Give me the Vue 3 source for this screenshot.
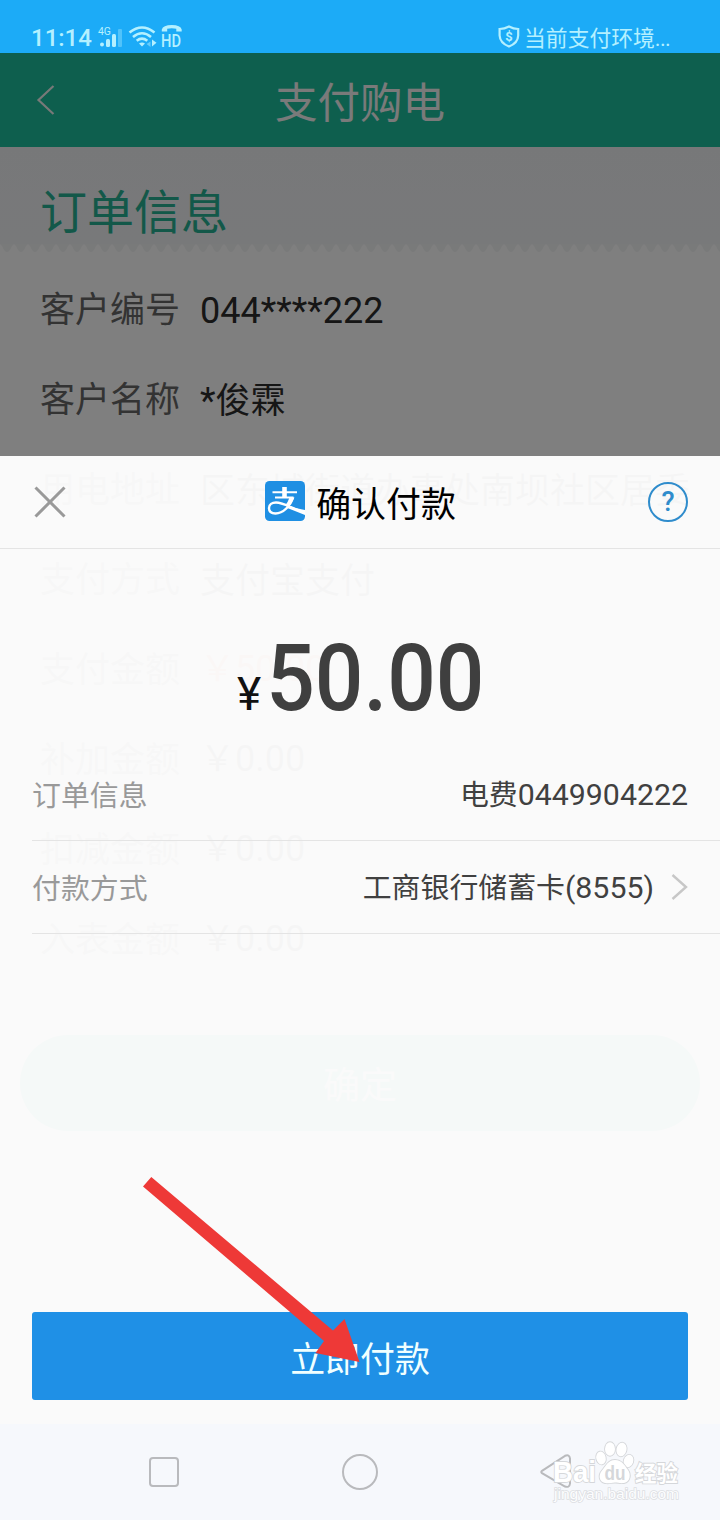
<script setup>
import { reactive } from "vue";

const local_data = reactive({
    order: [
        { label: "客户编号", number: "044****222" },
        { label: "客户名称", number: "*", value: "俊霖" },
        { label: "用电地址", value: "区东城街道办事处南坝社区居委" },
        { label: "支付方式", value: "支付宝支付" },
        { label: "支付金额", number: "50.00", money: true, red: true },
        { label: "补加金额", number: "0.00", money: true },
        { label: "扣减金额", number: "0.00", money: true },
        { label: "入表金额", number: "0.00", money: true },
    ],
    amount: "50.00",
    card: "(8555)",
});
</script>
<template>
    <div class="screen">
        <div class="status">
            <div class="status_left">
                <span class="time">11:14</span>
                <svg class="signal" width="26" height="22" viewBox="0 0 26 22">
                    <text x="0" y="9" textLength="13" lengthAdjust="spacingAndGlyphs" class="signal_text">4G</text>
                    <circle cx="4" cy="18.500" r="2" />
                    <rect x="8" y="13" width="4" height="8" rx="1.5" />
                    <rect x="14" y="8" width="4" height="13" rx="1.5" />
                    <rect x="20" y="3" width="4" height="18" rx="1" opacity="0.35" />
                </svg>
                <svg class="wifi" width="30" height="22" viewBox="0 0 30 22">
                    <g fill="none" stroke="#b4f0ff" stroke-width="2.6">
                        <path d="M1.5 6.5Q14 -3.5 26.500 6.500" />
                        <path d="M5 11Q14 3.500 23 11" />
                        <path d="M8.700 14.800Q14 10.500 19.300 14.800" />
                    </g>
                    <path d="M11 17.500Q14 15.500 17 17.500L14 20.500Z" />
                    <path d="M22.500 15.500V21L18.500 18Z" opacity="0.5" />
                    <path d="M24 13.500V20.500L28.500 16.800Z" />
                </svg>
                <svg class="hd" width="24" height="28" viewBox="0 0 24 28">
                    <path d="M0.800 7.500V5.500Q2 1 10.800 1Q19.600 1 20.700 5.500V7.500H15.300V4.800Q10.800 3.800 6.200 4.800V7.500Z" />
                    <text x="0" y="23" textLength="20" lengthAdjust="spacingAndGlyphs" class="hd_text">HD</text>
                </svg>
            </div>
            <div class="status_right">
                <svg width="22" height="23" viewBox="0 0 22 23">
                    <path
                        d="M11 1.400Q15.500 3.700 20.200 4V10.500Q20 18 11 21.500Q2 18 1.600 10.500V4Q6.500 3.700 11 1.400Z"
                        fill="none"
                        stroke="#b4f0ff"
                        stroke-width="2.200"
                    />
                    <text x="11" y="15.500" text-anchor="middle" class="shield_text">$</text>
                </svg>
                <span>当前支付环境<span class="dots">...</span></span>
            </div>
        </div>
        <div class="page">
            <div class="title_bar">
                <svg class="back" width="20" height="32" viewBox="0 0 20 32">
                    <path d="M17.500 2L2.500 16L17.500 30" fill="none" stroke="#f0f2f1" stroke-width="2.200" />
                </svg>
                <div class="title">支付购电</div>
            </div>
            <div class="section">订单信息</div>
            <svg class="zigzag" width="720" height="10">
                <defs>
                    <pattern id="teeth" width="14" height="10" patternUnits="userSpaceOnUse">
                        <path d="M0 0H14L12 2Q7 14 2 2Z" fill="#f3f4f5" />
                    </pattern>
                </defs>
                <rect width="720" height="10" fill="url(#teeth)" />
            </svg>
            <div class="fields">
                <div class="line_fields" v-for="item in local_data.order" :key="item.label">
                    <div class="label">{{ item.label }}</div>
                    <div class="value" :class="{ red: item.red, money: item.money }">
                        <span v-if="item.money">￥</span
                        ><span class="number">{{ item.number }}</span
                        >{{ item.value }}
                    </div>
                </div>
            </div>
            <div class="confirm">确定</div>
        </div>
        <div class="mask"></div>
        <div class="sheet">
            <div class="sheet_header">
                <svg width="36" height="36" viewBox="0 0 36 36">
                    <path d="M3.500 3.500L32.500 32.500M32.500 3.500L3.500 32.500" stroke="#999" stroke-width="3" />
                </svg>
                <div class="sheet_title">
                    <svg width="40" height="40" viewBox="0 0 40 40">
                        <rect width="40" height="40" rx="4.500" fill="#1f8fe3" />
                        <g fill="none" stroke="#fff">
                            <path d="M7.500 11.300H32M10 16.500H28.500" stroke-width="2" />
                            <path d="M19.500 6V17" stroke-width="4.600" />
                            <path
                                d="M28 16.500C25.500 25 18 32.500 10.500 32.500C6 32.500 4 30 4 27C4 23.500 7 21.500 11 21.500C19 21.500 28 28 40 31.500"
                                stroke-width="2.400"
                            />
                        </g>
                        <path d="M22.500 24.500Q30 27.500 40 29V34Q30 30 21 26.500Z" fill="#fff" />
                        <path d="M24.500 16.500H29.500Q27 22 23 26L20.500 24Q23 21 24.500 16.500Z" fill="#fff" />
                    </svg>
                    <span>确认付款</span>
                </div>
                <div class="help">?</div>
            </div>
            <div class="amount">
                <span class="amount_sign">¥</span>
                <span class="amount_value">{{ local_data.amount }}</span>
            </div>
            <div class="sheet_line">
                <div class="sheet_label">订单信息</div>
                <div class="sheet_value">电费<span class="digits">0449904222</span></div>
            </div>
            <div class="sheet_line">
                <div class="sheet_label">付款方式</div>
                <div class="sheet_value with_arrow">
                    <div>工商银行储蓄卡<span class="digits">{{ local_data.card }}</span></div>
                    <svg width="17" height="28" viewBox="0 0 17 28">
                        <path d="M1.500 1L15 13L1.500 25" fill="none" stroke="#c7c7c7" stroke-width="2.400" />
                    </svg>
                </div>
            </div>
            <button class="pay">立即付款</button>
        </div>
        <div class="nav">
            <div class="nav_item"><div class="nav_square"></div></div>
            <div class="nav_item"><div class="nav_circle"></div></div>
            <div class="nav_item">
                <svg width="34" height="38" viewBox="0 0 34 38">
                    <path
                        d="M3 17.800L26 2.800Q30.500 1 31 5.500V30.500Q30.500 35 26 33.500L3 20.200Q1.500 19 3 17.800Z"
                        fill="none"
                        stroke="#b9babd"
                        stroke-width="2"
                    />
                </svg>
            </div>
        </div>
        <svg class="arrow" width="220" height="190" viewBox="0 0 220 190">
            <path d="M11.300 7L193 160.500L204.500 149L219.500 192L175.500 183L184 171L3 16.500Z" fill="#ee3937" />
        </svg>
        <svg class="watermark" width="136" height="66" viewBox="0 0 136 66">
            <g fill="#fff" stroke="#d5d7da" stroke-width="1.800" paint-order="stroke">
                <text x="1" y="42" textLength="43" lengthAdjust="spacingAndGlyphs" class="mark_baidu">Bai</text>
                <ellipse cx="49" cy="18" rx="4.700" ry="6.500" transform="rotate(-12 49 18)" />
                <ellipse cx="58" cy="9" rx="5" ry="6.800" />
                <ellipse cx="69.500" cy="9.500" rx="5" ry="6.800" transform="rotate(12 69.500 9.500)" />
                <ellipse cx="76.500" cy="21" rx="4.700" ry="6.300" transform="rotate(18 76.500 21)" />
                <path
                    d="M63 20C70 20 73 26 76 30C79 34 78.500 42 72 43C68 43.500 66 42.500 63 42.500C59 42.500 57 44 53 43C47 42 46 35 50 30.500C54 26 56 20 63 20Z"
                />
                <text x="83" y="41" textLength="43" lengthAdjust="spacingAndGlyphs" class="mark_cjk">经验</text>
            </g>
            <text x="52.500" y="39.500" textLength="21" lengthAdjust="spacingAndGlyphs" class="mark_du">du</text>
            <text x="2" y="58.500" textLength="125" lengthAdjust="spacingAndGlyphs" class="mark_url">jingyan.baidu.com</text>
        </svg>
    </div>
</template>
<style>
body {
    margin: 0;
}
</style>
<style scoped>
.screen {
    position: relative;
    width: 720px;
    height: 1520px;
    overflow: hidden;
    display: flex;
    flex-direction: column;
    background: #fff;
    font-family: Roboto, "Noto Sans CJK SC", sans-serif;
}

.status {
    height: 53px;
    flex: none;
    box-sizing: border-box;
    padding: 22px 50px 0 31px;
    display: flex;
    justify-content: space-between;
    background: #1cabf7;
    color: #b4f0ff;
    fill: #b4f0ff;
}
.status_left,
.status_right {
    display: flex;
    height: 31px;
}
.time {
    width: 67px;
    font-size: 24px;
    line-height: 33px;
    font-weight: 500;
}
.signal {
    margin-top: 4px;
}
.signal_text {
    font-size: 11px;
}
.wifi {
    margin: 4px 0 0 4px;
}
.hd {
    margin: 2px 0 0 3px;
}
.hd_text {
    font-size: 17.500px;
    font-weight: 500;
}
.status_right {
    font-size: 21.800px;
    line-height: 33px;
    gap: 4px;
}
.status_right svg {
    margin-top: 3px;
}
.dots {
    letter-spacing: -0.7px;
}
.shield_text {
    font-size: 13px;
    font-weight: 700;
}

.page {
    height: 1371px;
    flex: none;
    display: flex;
    flex-direction: column;
    background: #fff;
}
.title_bar {
    height: 94px;
    flex: none;
    display: flex;
    align-items: center;
    background: #1cbe9c;
}
.back {
    margin-left: 36px;
}
.title {
    flex: 1;
    margin-right: 56px;
    padding-top: 7px;
    text-align: center;
    font-size: 42.500px;
    line-height: 60px;
    color: #f4f4f4;
}
.section {
    height: 97px;
    flex: none;
    box-sizing: border-box;
    padding: 33px 0 0 40px;
    font-size: 47px;
    line-height: 66px;
    color: #26b192;
    background: linear-gradient(#eff1f3, #f1f2f5);
}
.zigzag {
    display: block;
}
.fields {
    margin-top: 12px;
}
.line_fields {
    height: 90px;
    display: flex;
    align-items: center;
    padding-left: 40px;
    font-size: 35px;
    line-height: 52px;
    white-space: nowrap;
}
.label {
    width: 160px;
    flex: none;
    color: #666;
}
.value {
    color: #2c2c2c;
}
.number {
    font-size: 36px;
}
.money {
    margin-top: -4px;
}
.red {
    color: #f0643c;
}
.confirm {
    height: 96px;
    box-sizing: border-box;
    margin: 49px 20px 0;
    padding-top: 4px;
    border-radius: 48px;
    background: #1cbe9c;
    color: #fff;
    font-size: 37px;
    line-height: 96px;
    text-align: center;
}

.mask {
    position: absolute;
    top: 53px;
    left: 0;
    right: 0;
    height: 1371px;
    background: rgba(0, 0, 0, 0.5);
}

.sheet {
    position: absolute;
    top: 456px;
    left: 0;
    right: 0;
    height: 968px;
    display: flex;
    flex-direction: column;
    background: rgba(255, 255, 255, 0.96);
}
.sheet_header {
    height: 92px;
    flex: none;
    padding: 0 32px;
    display: flex;
    align-items: center;
    justify-content: space-between;
    border-bottom: 1px solid #e4e4e4;
}
.sheet_title {
    display: flex;
    align-items: center;
    gap: 11px;
    margin-top: -2px;
    padding-left: 5px;
    font-size: 34.900px;
    line-height: 50px;
    color: #000;
}
.sheet_title span {
    padding-top: 9px;
}
.help {
    width: 40px;
    height: 40px;
    box-sizing: border-box;
    border: 2.500px solid #2f8ccc;
    border-radius: 50%;
    color: #2f8ccc;
    font-size: 27px;
    font-weight: 500;
    line-height: 37px;
    text-align: center;
}
.amount {
    height: 199px;
    flex: none;
    padding-left: 10px;
    display: flex;
    justify-content: center;
    align-items: baseline;
}
.amount_sign {
    margin-right: -3px;
    font-size: 46px;
    color: #111;
}
.amount_value {
    font-size: 92px;
    line-height: 260px;
    font-weight: 500;
    color: #3f3f3f;
    transform: scaleX(0.93);
}
.sheet_line {
    height: 92px;
    flex: none;
    margin-left: 32px;
    padding-right: 32px;
    display: flex;
    align-items: center;
    justify-content: space-between;
    border-bottom: 1px solid #e4e4e4;
    font-size: 28.900px;
    line-height: 42px;
}
.sheet_label,
.sheet_value {
    margin-top: 2px;
}
.sheet_label {
    padding-top: 2px;
    color: #999;
}
.sheet_value {
    color: #404040;
}
.digits {
    font-size: 30.300px;
}
.with_arrow {
    display: flex;
    align-items: center;
    gap: 17px;
}
.pay {
    height: 88px;
    flex: none;
    margin: auto 32px 24px;
    padding: 1px 0 0;
    border: none;
    border-radius: 3px;
    background: #1f90e6;
    color: #f0ffff;
    font-family: inherit;
    font-size: 34.900px;
}

.nav {
    height: 96px;
    flex: none;
    padding: 0 66px;
    display: flex;
    background: #f6f8fc;
}
.nav_item {
    flex: 1;
    display: flex;
    align-items: center;
    justify-content: center;
}
.nav_square {
    width: 26px;
    height: 26px;
    border: 2px solid #b9babd;
    border-radius: 4px;
}
.nav_circle {
    width: 32px;
    height: 32px;
    border: 2px solid #b9babd;
    border-radius: 50%;
}

.arrow {
    position: absolute;
    top: 1170px;
    left: 140px;
    overflow: visible;
}
.watermark {
    position: absolute;
    top: 1440px;
    left: 552px;
}
.mark_baidu {
    font-family: "Liberation Sans", sans-serif;
    font-size: 30px;
    font-weight: 700;
}
.mark_cjk {
    font-size: 22px;
    font-weight: 700;
}
.mark_du {
    font-family: "Liberation Sans", sans-serif;
    font-size: 20px;
    font-weight: 700;
    fill: #d5d7da;
}
.mark_url {
    font-family: "Liberation Sans", sans-serif;
    font-size: 15px;
    fill: #fdfdfe;
    stroke: #dcdee2;
    stroke-width: 1.500px;
    paint-order: stroke;
}
</style>
